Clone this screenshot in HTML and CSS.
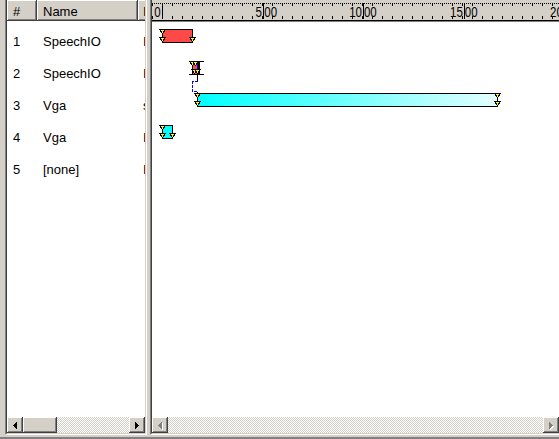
FILE: index.html
```html
<!DOCTYPE html>
<html>
    <head>
        <meta charset="utf-8">
        <link rel="stylesheet" href="styles.css">
    </head>
    <body>
        <div class="frame">
            <div class="edge"></div>

            <div class="pane list-pane">
                <div class="pane-inner">
                    <div class="list-view">
                        <div class="list-head">
                            <span class="head-cell col-num">#</span>
                            <span class="head-cell col-name">Name</span>
                            <span class="head-cell col-info">Info</span>
                        </div>
                        <ul class="rows">
                            <li class="row"><span class="col-num">1</span><span class="col-name">SpeechIO</span><span class="col-info">Input</span></li>
                            <li class="row"><span class="col-num">2</span><span class="col-name">SpeechIO</span><span class="col-info">Input</span></li>
                            <li class="row"><span class="col-num">3</span><span class="col-name">Vga</span><span class="col-info">sync</span></li>
                            <li class="row"><span class="col-num">4</span><span class="col-name">Vga</span><span class="col-info">Irq</span></li>
                            <li class="row"><span class="col-num">5</span><span class="col-name">[none]</span><span class="col-info">Idle</span></li>
                        </ul>
                    </div>
                    <div class="hscroll">
                        <span class="sb-btn"><svg width="4" height="7"><path d="M0 3h1v1H0zM1 2h1v3H1zM2 1h1v5H2zM3 0h1v7H3z"/></svg></span>
                        <span class="sb-thumb"></span>
                        <span class="sb-track"></span>
                        <span class="sb-btn"><svg width="4" height="7"><path d="M3 3h1v1H3zM2 2h1v3H2zM1 1h1v5H1zM0 0h1v7H0z"/></svg></span>
                    </div>
                </div>
            </div>

            <div class="splitter"></div>

            <div class="pane chart-pane">
                <div class="pane-inner">
                    <div class="ruler">
                        <svg width="407" height="22" shape-rendering="crispEdges">
                            <defs>
                                <pattern id="dots" width="2" height="1" patternUnits="userSpaceOnUse">
                                    <rect width="1" height="1" fill="#000"/>
                                </pattern>
                                <pattern id="ticks" x="10" width="10" height="22" patternUnits="userSpaceOnUse">
                                    <rect x="0" y="3" width="1" height="3" fill="#000"/>
                                    <rect x="0" y="16" width="1" height="3" fill="#000"/>
                                </pattern>
                            </defs>
                            <rect width="407" height="22" fill="#d4d0c8"/>
                            <rect x="0" y="3" width="407" height="1" fill="url(#dots)"/>
                            <rect x="0" y="0" width="407" height="22" fill="url(#ticks)"/>
                            <rect x="10" y="3" width="1" height="16" fill="#000"/>
                            <rect x="111" y="3" width="1" height="16" fill="#000"/>
                            <rect x="211" y="3" width="1" height="16" fill="#000"/>
                            <rect x="312" y="3" width="1" height="16" fill="#000"/>
                            <rect x="0" y="20" width="407" height="1" fill="#000"/>
                            <rect x="0" y="21" width="407" height="1" fill="#808080"/>
                            <g class="ruler-text" transform="scale(0.82 1)">
                                <text x="10.5" y="17" text-anchor="end">0</text>
                                <text x="134" y="17" text-anchor="end">5</text>
                                <text x="137" y="17">00</text>
                                <text x="256" y="17" text-anchor="end">10</text>
                                <text x="258.5" y="17">00</text>
                                <text x="379" y="17" text-anchor="end">15</text>
                                <text x="381.5" y="17">00</text>
                                <text x="501" y="17" text-anchor="end">20</text>
                            </g>
                        </svg>
                    </div>
                    <div class="chart">
                        <svg width="407" height="395" shape-rendering="crispEdges">
                            <defs>
                                <linearGradient id="fade" x1="0" x2="1">
                                    <stop offset="0" stop-color="#00ffff"/>
                                    <stop offset="1" stop-color="#e6ffff"/>
                                </linearGradient>
                                <polygon id="mk" points="-2.5,0.5 3.5,0.5 0.5,4.5" fill="#ffff00" stroke="#000"/>
                            </defs>

                            <!-- row 1 -->
                            <rect x="10.5" y="7.5" width="30" height="13" fill="#ff4848" stroke="#000"/>
                            <use href="#mk" x="10" y="7"/>
                            <use href="#mk" x="10" y="15"/>
                            <use href="#mk" x="40" y="15"/>

                            <!-- row 2 -->
                            <line x1="37" y1="39.5" x2="52" y2="39.5" stroke="#000"/>
                            <rect x="40.5" y="39.5" width="6" height="13" fill="#ff4848" stroke="#000"/>
                            <line x1="45.5" y1="40" x2="45.5" y2="52" stroke="#0000ff"/>
                            <line x1="47.5" y1="39" x2="47.5" y2="53" stroke="#000"/>
                            <line x1="37" y1="52.5" x2="52" y2="52.5" stroke="#000"/>
                            <use href="#mk" x="40" y="39"/>
                            <use href="#mk" x="43" y="39"/>
                            <use href="#mk" x="42" y="47"/>
                            <use href="#mk" x="45" y="47"/>

                            <!-- link 2 -> 3 -->
                            <line x1="45.5" y1="53" x2="45.5" y2="59" stroke="#000"/>
                            <path d="M45.5 59.5H40.5V69.5H45.5" fill="none" stroke="#0000ff" stroke-dasharray="3 1"/>
                            <line x1="45.5" y1="70" x2="45.5" y2="71" stroke="#000"/>

                            <!-- row 3 -->
                            <rect x="45.5" y="71.5" width="300" height="13" fill="url(#fade)" stroke="#000"/>
                            <use href="#mk" x="45" y="71"/>
                            <use href="#mk" x="45" y="79"/>
                            <use href="#mk" x="345" y="71"/>
                            <use href="#mk" x="345" y="79"/>

                            <!-- row 4 -->
                            <rect x="10.5" y="103.5" width="10" height="13" fill="#00ffff" stroke="#000"/>
                            <use href="#mk" x="10" y="103"/>
                            <use href="#mk" x="10" y="111"/>
                            <use href="#mk" x="20" y="111"/>
                        </svg>
                    </div>
                    <div class="hscroll">
                        <span class="sb-btn off"><svg width="5" height="8"><path fill="#fff" d="M1 4h1v1H1zM2 3h1v3H2zM3 2h1v5H3zM4 1h1v7H4z"/><path fill="#808080" d="M0 3h1v1H0zM1 2h1v3H1zM2 1h1v5H2zM3 0h1v7H3z"/></svg></span>
                        <span class="sb-track"></span>
                        <span class="sb-btn off"><svg width="5" height="8"><path fill="#fff" d="M4 4h1v1H4zM3 3h1v3H3zM2 2h1v5H2zM1 1h1v7H1z"/><path fill="#808080" d="M3 3h1v1H3zM2 2h1v3H2zM1 1h1v5H1zM0 0h1v7H0z"/></svg></span>
                    </div>
                </div>
            </div>
        </div>
        <div class="bottom"></div>
    </body>
</html>
```

FILE: styles.css
```css
* {
    box-sizing: border-box;
}

body {
    margin: 0;
    width: 559px;
    height: 439px;
    overflow: hidden;
    background: #d4d0c8;
    font-family: "Liberation Sans", Arial, sans-serif;
    font-size: 13px;
    color: #000;
}

.frame {
    display: flex;
    height: 435px;
}

.edge {
    flex: none;
    width: 5px;
}

.splitter {
    flex: none;
    width: 3px;
}

/* sunken 3d border, two pixels each side */
.pane {
    flex: none;
    height: 100%;
    border-left: 1px solid #808080;
    border-right: 1px solid #fff;
    border-bottom: 1px solid #fff;
}

.pane-inner {
    display: flex;
    flex-direction: column;
    height: 100%;
    border-left: 1px solid #404040;
    border-right: 1px solid #d4d0c8;
    border-bottom: 1px solid #d4d0c8;
}

.list-pane {
    width: 142px;
}

.chart-pane {
    width: 411px;
}

.list-view {
    flex: 1;
    background: #fff;
    overflow: hidden;
}

.list-head {
    display: flex;
    height: 21px;
    white-space: nowrap;
}

.head-cell {
    flex: none;
    padding: 3px 0 0 6px;
    line-height: 17px;
    background: #d4d0c8;
    box-shadow: inset -1px -1px #404040, inset 1px 1px #fff, inset -2px -2px #808080;
}

.col-num {
    width: 30px;
}

.col-name {
    width: 101px;
}

.col-info {
    width: 60px;
}

.rows {
    list-style: none;
    margin: 0;
    padding: 5px 0 0;
}

.row {
    display: flex;
    height: 32px;
    line-height: 32px;
    white-space: nowrap;
}

.row span {
    flex: none;
    padding-left: 6px;
}

.row .col-info,
.head-cell.col-info {
    padding-left: 5px;
}

/* scroll bars */
.hscroll {
    flex: none;
    display: flex;
    height: 16px;
}

.sb-btn,
.sb-thumb {
    flex: none;
    height: 16px;
    background: #d4d0c8;
    box-shadow: inset -1px -1px #404040, inset 1px 1px #fff, inset -2px -2px #808080, inset 2px 2px #d4d0c8;
}

.sb-btn {
    width: 16px;
    display: flex;
    align-items: center;
    justify-content: center;
}

.sb-btn svg {
    display: block;
}

.sb-btn.off svg {
    margin: 1px 0 0 1px;
}

.sb-thumb {
    width: 34px;
}

.sb-track {
    flex: 1;
    background: repeating-conic-gradient(#d4d0c8 0 25%, #fff 0 50%) 0 0 / 2px 2px;
}

/* time ruler and chart */
.ruler {
    flex: none;
    height: 22px;
}

.ruler svg,
.chart svg {
    display: block;
}

.ruler-text {
    font-family: "Liberation Sans", Arial, sans-serif;
    font-size: 14px;
    fill: #000;
}

.chart {
    flex: 1;
    background: #fff;
    overflow: hidden;
}

.bottom {
    height: 4px;
    border-bottom: 2px solid #808080;
}
```
